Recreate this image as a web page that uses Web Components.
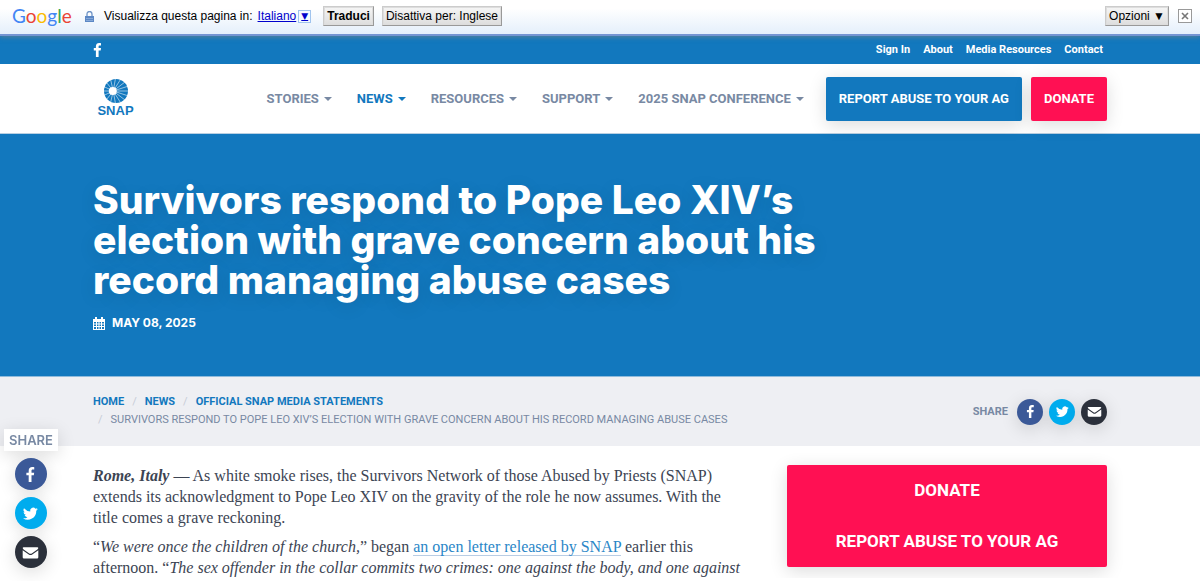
<!DOCTYPE html>
<html lang="en">
<head>
<meta charset="utf-8">
<meta name="viewport" content="width=device-width, initial-scale=1">
<title>Survivors respond to Pope Leo XIV’s election - SNAP</title>
<style>
:root {
  --blue: #1278be;
  --red: #ff1053;
  --slate: #7889a3;
  --pale: #eeeff3;
  --ink: #3c4453;
  --wrap: 1014px;
  --narrow: Roboto, sans-serif;
  --display: Inter, "Open Sans", sans-serif;
  --serif: "Liberation Serif", serif;
  --ui: "Liberation Sans", sans-serif;
  --lift: 0 4px 18px rgba(0, 0, 0, .14);
}
body { margin: 0; background: #fff; color: var(--ink); font-family: var(--serif); }
</style>
</head>
<body>
<translate-bar></translate-bar>
<top-bar></top-bar>
<site-header>
  <nav-item>Stories</nav-item>
  <nav-item active>News</nav-item>
  <nav-item>Resources</nav-item>
  <nav-item>Support</nav-item>
  <nav-item>2025 SNAP Conference</nav-item>
</site-header>
<main>
  <page-hero date="May 08, 2025">Survivors respond to Pope Leo XIV’s election with grave concern about his record managing abuse cases</page-hero>
  <crumb-bar></crumb-bar>
  <story-layout>
    <story-text></story-text>
    <side-actions slot="side"></side-actions>
  </story-layout>
</main>
<share-rail></share-rail>

<script>
function define(name, html) {
  const template = document.createElement('template');
  template.innerHTML = '<style>*{box-sizing:border-box}</style>' + html;
  customElements.define(name, class extends HTMLElement {
    constructor() {
      super();
      this.attachShadow({ mode: 'open' }).append(template.content.cloneNode(true));
    }
    connectedCallback() {
      const date = this.shadowRoot.querySelector('[data-date]');
      if (date) date.textContent = this.getAttribute('date');
    }
  });
}

const ICONS = {
  facebook: ['Facebook', '<svg viewBox="0 0 14 24"><path fill="#fff" d="M13 .2v3.900h-2.300c-1.800 0-2.100.9-2.100 2.100v2.800h4.300l-.6 4.300H8.600V24H4.100V13.300H.4V9h3.700V5.800C4.100 2.100 6.400 0 9.700 0c1.600 0 2.900.1 3.300.2z"/></svg>'],
  twitter: ['Twitter', '<svg viewBox="0 0 24 24"><path fill="#fff" d="M23.6 4.900a9.700 9.700 0 0 1-2.700.8 4.800 4.800 0 0 0 2.100-2.700 9.500 9.500 0 0 1-3.100 1.200 4.800 4.800 0 0 0-8.300 4.400A13.700 13.700 0 0 1 1.600 3.600a4.800 4.800 0 0 0 1.500 6.500 4.800 4.800 0 0 1-2.200-.6v.1a4.800 4.800 0 0 0 3.900 4.700 4.800 4.800 0 0 1-2.200.1 4.800 4.800 0 0 0 4.500 3.400A9.700 9.700 0 0 1 0 19.700 13.700 13.700 0 0 0 21.200 7.500a9.800 9.800 0 0 0 2.400-2.600z"/></svg>'],
  email: ['Email', '<svg viewBox="0 0 24 24"><path fill="#fff" d="M1 3.500h22a1.500 1.500 0 0 1 1.500 1.300c-.1.700-.7 1.500-1.500 2.200l-9 6.400c-1.400 1-2.600 1-4 0L1 7C.2 6.400-.4 5.500-.5 4.800A1.500 1.500 0 0 1 1 3.500zM-.5 8.200l9.700 6.900c2 1.300 3.600 1.300 5.600 0l9.700-6.900v11.300a2 2 0 0 1-2 2h-21a2 2 0 0 1-2-2z"/></svg>']
};

customElements.define('social-link', class extends HTMLElement {
  constructor() {
    super();
    this.attachShadow({ mode: 'open' });
  }
  connectedCallback() {
    const [label, svg] = ICONS[this.getAttribute('kind')];
    this.shadowRoot.innerHTML = `<style>
      :host{display:block;--bg:#3b5998}
      :host([kind=twitter]){--bg:#00acee}
      :host([kind=email]){--bg:#2b303b}
      a{display:flex;align-items:center;justify-content:center;width:var(--size,26px);height:var(--size,26px);border-radius:50%;background:var(--bg);box-shadow:var(--lift)}
      svg{display:block;width:var(--glyph,13px);height:var(--glyph,13px);overflow:visible}
    </style><a href="#" aria-label="${label}">${svg}</a>`;
  }
});

define('nav-item', `<style>
  :host{display:block}
  a{display:flex;align-items:center;gap:5px;color:var(--slate);font:bold 13px/20px var(--narrow);text-transform:uppercase;text-decoration:none;white-space:nowrap}
  a::after{content:"";border:4px solid transparent;border-top-color:currentColor;border-bottom:0}
  :host([active]) a{color:var(--blue)}
</style><a href="#"><span><slot></slot></span></a>`);

define('translate-bar', `<style>
  :host{display:flex;align-items:center;height:36px;padding:0 8px 2px 12px;background:linear-gradient(#fff 25%,#e4effb);border-bottom:2px solid #7494d2;color:#000;font:12px/16px var(--ui);position:relative;z-index:1;box-shadow:0 1px 5px rgba(110,130,140,.8);box-sizing:border-box}
  .logo{font:19px/22px Lato,sans-serif;width:73px}
  .lock{width:9px;height:11px;margin-right:10px}
  .lang{display:flex;align-items:center;margin:0 12px 0 5px;color:#00c;gap:2px}
  .lang i{width:13px;height:13px;border:1px solid #a0c4ee;background:#f5faff;font:9px/11px "DejaVu Sans",sans-serif;text-align:center}
  button{height:20px;margin:0 8px 0 0;padding:0 3px;border:1px solid;border-color:#ccc #999 #999 #ccc;outline:1px solid #ddd;outline-offset:-2px;border-radius:0;background:linear-gradient(#f6f6f6,#ddd);color:#000;font:12px/16px var(--ui)}
  .strong{font-weight:bold}
  .opt{margin-left:auto;margin-right:9px}
  .close{width:14px;height:14px;margin:0;padding:2px;border:1px solid #999;outline:0;background:#fff;display:flex}
  .close svg{width:8px;height:8px}
  .b{color:#4285f4}.r{color:#ea4335}.y{color:#fbbc05}.g{color:#34a853}
</style>
<span class="logo"><span class="b">G</span><span class="r">o</span><span class="y">o</span><span class="b">g</span><span class="g">l</span><span class="r">e</span></span>
<svg class="lock" viewBox="0 0 9 11"><path d="M2 5V3a2.500 2.500 0 0 1 5 0v2" fill="none" stroke="#6d93c6" stroke-width="1.300"/><path fill="#5c88c5" d="M0 5h9v6H0z"/><path stroke="#87a9d8" d="M1 7.500h7M1 9.500h7"/></svg>
<span>Visualizza questa pagina in:</span>
<a class="lang" href="#">Italiano<i>▼</i></a>
<button class="strong">Traduci</button>
<button>Disattiva per: Inglese</button>
<button class="opt">Opzioni ▼</button>
<button class="close" aria-label="Chiudi"><svg viewBox="0 0 8 8"><path d="M1 1l6 6M7 1L1 7" stroke="#777" stroke-width="1.600"/></svg></button>`);

define('top-bar', `<style>
  :host{display:block;background:var(--blue)}
  div{display:flex;align-items:center;max-width:var(--wrap);height:28px;margin:0 auto}
  .fb{display:block;margin-right:auto}
  .fb svg{display:block;width:9px;height:14px}
  nav{display:flex;gap:13px;padding-right:4px}
  a{color:#fff;font:bold 11px/20px var(--narrow);text-decoration:none}
</style>
<div><a class="fb" href="#" aria-label="Facebook"><svg viewBox="0 0 9 14"><path fill="#fff" d="M8 .2v2.300H6.700c-1 0-1.100.5-1.100 1.200v1.300h2.400l-.3 2.500H5.600V14H2.900V7.500H.8V5h2.100V3.300C2.900 1.200 4.200 0 6.100 0 7 0 7.700.1 8 .2z"/></svg></a>
<nav><a href="#">Sign In</a><a href="#">About</a><a href="#">Media Resources</a><a href="#">Contact</a></nav></div>`);

const rays = [0, 22, 45, 68, 92, 115, 138, 160, 180, 200, 222, 245, 268, 292, 315, 338]
  .map(a => `<path d="M10 13L${(13 + 14 * Math.cos(a * Math.PI / 180)).toFixed(1)} ${(13 + 14 * Math.sin(a * Math.PI / 180)).toFixed(1)}"/>`).join('');

define('site-header', `<style>
  :host{display:block;border-bottom:1px solid #b8cfe2}
  .row{display:flex;align-items:center;max-width:var(--wrap);height:69px;margin:0 auto}
  .logo{display:flex;flex-direction:column;align-items:center;gap:1px;width:45px;margin-right:auto;color:var(--blue);font:bold 13px/14px var(--ui);text-decoration:none}
  .logo svg{display:block;width:24px;height:24px}
  nav{display:flex;gap:25px;margin-right:22px}
  .btn{display:flex;align-items:center;height:44px;padding:0 13px;border-radius:2px;color:#fff;font:bold 13px/20px var(--narrow);text-decoration:none;text-transform:uppercase;white-space:nowrap;box-shadow:var(--lift)}
  .report{background:var(--blue);margin-right:9px}
  .donate{background:var(--red)}
</style>
<div class="row"><a class="logo" href="#"><svg viewBox="0 0 26 26" aria-hidden="true"><circle cx="13" cy="13" r="13" fill="#1278be"/><g stroke="#fff" stroke-width=".6">${rays}</g><circle cx="9.500" cy="13" r="4.300" fill="#fff"/></svg><span>SNAP</span></a>
<nav><slot></slot></nav>
<a class="btn report" href="#">Report abuse to your AG</a><a class="btn donate" href="#">Donate</a></div>`);

define('page-hero', `<style>
  :host{display:block;background:var(--blue);color:#fff;border-bottom:1px solid #8fbbdc}
  div{max-width:var(--wrap);margin:0 auto;padding:46px 0 43px}
  h1{max-width:752px;margin:0 0 13px;font:800 39px/40px var(--display);text-shadow:0 4px 18px rgba(0,0,0,.1)}
  p{display:flex;align-items:center;gap:7px;margin:0;font:bold 12px/20px var(--display);text-transform:uppercase}
  svg{width:12px;height:13px}
</style>
<div><h1><slot></slot></h1><p><svg viewBox="0 0 12 13"><path fill="#fff" fill-rule="evenodd" d="M0 2h2V0h2v2h4V0h2v2h2v11H0zM1 5v1.500h2V5zm3 0v1.500h1.500V5zm2.500 0v1.500H8V5zM9 5v1.500h2V5zM1 7.500V9h2V7.500zm3 0V9h1.500V7.500zm2.500 0V9H8V7.500zm2.500 0V9h2V7.500zM1 10v2h2v-2zm3 0v2h1.500v-2zm2.500 0v2H8v-2zM9 10v2h2v-2z"/></svg><span data-date></span></p></div>`);

define('crumb-bar', `<style>
  :host{display:block;background:var(--pale)}
  .row{display:flex;align-items:center;max-width:var(--wrap);min-height:69px;margin:0 auto}
  ol{display:flex;flex-wrap:wrap;flex:1;max-width:676px;margin:0 auto 0 0;padding:0 0 2px;list-style:none;font:11px/18px var(--narrow);text-transform:uppercase;color:var(--slate)}
  li+li::before{content:"/";padding:0 8px;color:#c6ccd6}
  li:last-child::before{padding-left:5px}
  a{color:var(--blue);font-weight:bold;text-decoration:none}
  .share{display:flex;align-items:center;gap:6px;color:var(--slate);font:bold 11px/18px var(--narrow)}
  .share span{margin-right:3px}
</style>
<div class="row"><ol><li><a href="#">Home</a></li><li><a href="#">News</a></li><li><a href="#">Official SNAP Media Statements</a></li><li>Survivors respond to Pope Leo XIV’s election with grave concern about his record managing abuse cases</li></ol>
<div class="share"><span>SHARE</span><social-link kind="facebook"></social-link><social-link kind="twitter"></social-link><social-link kind="email"></social-link></div></div>`);

define('story-layout', `<style>
  :host{display:grid;grid-template-columns:minmax(0,1fr) 320px;gap:45px;align-items:start;max-width:var(--wrap);margin:0 auto;padding-top:19px}
</style><slot></slot><slot name="side"></slot>`);

define('story-text', `<style>
  :host{display:block;color:var(--ink);font:16px/21px var(--serif)}
  p{margin:0 0 8px}
  p:last-child{margin:0}
  a{color:#2a86c7;text-decoration:none;border-bottom:1px solid #b9cde4}
</style>
<p><strong><em>Rome, Italy</em></strong> — As white smoke rises, the Survivors Network of those Abused by Priests (SNAP) extends its acknowledgment to Pope Leo XIV on the gravity of the role he now assumes. With the title comes a grave reckoning.</p>
<p>“<em>We were once the children of the church,</em>” began <a href="#">an open letter released by SNAP</a> earlier this afternoon. “<em>The sex offender in the collar commits two crimes: one against the body, and one against</em></p>`);

define('side-actions', `<style>
  :host{display:flex;flex-direction:column;border-radius:2px;background:var(--red);box-shadow:var(--lift)}
  a{display:block;padding:15px 8px;color:#fff;font:bold 17px/21px var(--narrow);text-align:center;text-transform:uppercase;text-decoration:none}
</style><a href="#">Donate</a><a href="#">Report abuse to your AG</a>`);

define('share-rail', `<style>
  :host{position:fixed;left:4px;bottom:13px;display:flex;flex-direction:column;align-items:center;gap:7px;--size:32px;--glyph:15px}
  span{padding:1px 5px;background:#fff;color:var(--slate);font:600 13px/20px var(--display);box-shadow:var(--lift)}
</style><span>SHARE</span><social-link kind="facebook"></social-link><social-link kind="twitter"></social-link><social-link kind="email"></social-link>`);
</script>
</body>
</html>
